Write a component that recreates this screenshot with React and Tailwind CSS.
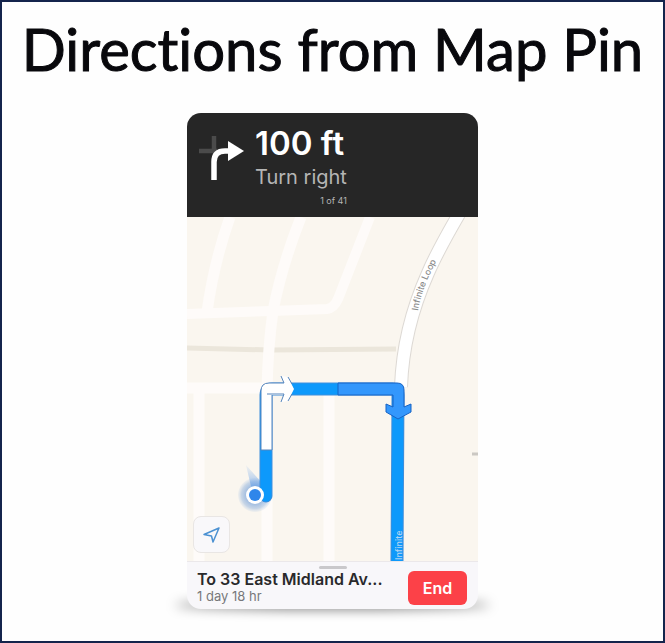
function TurnIcon() {
  return (
    <svg className="block h-12 w-12 shrink-0" viewBox="0 0 48 48" fill="none" aria-hidden="true">
      <path d="M0 18H18M15 3V18" stroke="#4b4b4b" strokeWidth="4.500" />
      <path d="M15 47V29Q15 18 26 18H32" stroke="#fff" strokeWidth="5.500" />
      <path d="M29 8L45 18L29 28Z" fill="#fff" />
    </svg>
  );
}

function MapView() {
  return (
    <svg className="block w-full" viewBox="0 0 291 344" role="img" aria-label="Route map">
      <defs>
        <radialGradient id="halo">
          <stop offset="0.4" stopColor="#6d9bd8" stopOpacity="0.75" />
          <stop offset="0.8" stopColor="#9bb9df" stopOpacity="0.55" />
          <stop offset="1" stopColor="#c5d5e8" stopOpacity="0.2" />
        </radialGradient>
        <linearGradient id="beam" x1="0" y1="0" x2="0" y2="1">
          <stop offset="0" stopColor="#8fb9ee" stopOpacity="0.1" />
          <stop offset="1" stopColor="#4b8fe4" stopOpacity="0.8" />
        </linearGradient>
        <path id="loop" d="M231 94Q235 69 254 36" />
      </defs>
      <rect width="291" height="344" fill="#faf6ef" />
      <path d="M0 131L83 133L209 132" fill="none" stroke="#ebe6db" strokeWidth="5" />
      <g fill="none" stroke="#fefbf9" strokeWidth="11">
        <path d="M43 0Q27 45 20 95" />
        <path d="M114 0Q95 48 86 94Q81 130 80 172V344" />
        <path d="M0 97L84 94L140 92Q147 91 151 82L183 0" strokeWidth="10" />
        <path d="M0 171H210" />
        <path d="M12 171V344M142 171V344" />
      </g>
      <path d="M272 -3Q250 35 241 56Q216 112 214 170" fill="none" stroke="#ddd9d4" strokeWidth="14" />
      <path d="M272 -3Q250 35 241 56Q216 112 214 170" fill="none" stroke="#fff" strokeWidth="12" />
      <text fill="#8c8c8c" className="font-['Inter',sans-serif] text-[9px] font-medium">
        <textPath href="#loop">Infinite Loop</textPath>
      </text>
      <path d="M285 237H291" stroke="#cbc8c3" strokeWidth="3" />
      <circle cx="68" cy="278" r="17" fill="url(#halo)" />
      <path d="M59 248L75 266L73 278H66Z" fill="url(#beam)" />
      <path
        d="M79 279V178Q79 172 85 172H205Q211 172 211 178L210 344"
        fill="none"
        stroke="#3f8edb"
        strokeWidth="13"
        strokeLinecap="round"
      />
      <path
        d="M79 279V178Q79 172 85 172H205Q211 172 211 178L210 344"
        fill="none"
        stroke="#0d99fb"
        strokeWidth="11"
        strokeLinecap="round"
      />
      <path
        d="M74 233V174Q74 166 82 166H97L94 159L101 160L107 172L101 184L94 185L97 178H85V233Z"
        fill="#fff"
      />
      <path
        d="M101 160L105 167M101 184L105 177M85 178V233H74V174Q74 166 82 166H97L94 159M80 177H97L94 185"
        fill="none"
        stroke="#5585bd"
        strokeWidth="1"
      />
      <path
        d="M151 166H210Q217 166 217 173V190L224 187V195L211 202L199 195V187L206 190V178H151Z"
        fill="#3397fc"
        stroke="#1763c4"
        strokeWidth="1"
      />
      <text
        transform="translate(215 343) rotate(-90)"
        fill="#b4d5f3"
        className="font-['Inter',sans-serif] text-[9px] font-medium"
      >
        Infinite
      </text>
      <circle cx="68" cy="278" r="9" fill="#fff" />
      <circle cx="68" cy="278" r="6" fill="#2f86ea" />
    </svg>
  );
}

export default function App() {
  return (
    <main className="flex min-h-screen flex-col items-center border-2 border-[#14244c] bg-[#fefefe] pb-8 font-['Inter',sans-serif]">
      <h1 className="mt-3 whitespace-nowrap font-['Lato',sans-serif] text-[58px] leading-[70px] text-[#08080c] [-webkit-text-stroke:1px_#08080c] [font-variant-ligatures:none]">
        Directions from Map Pin
      </h1>
      <section className="relative mt-[29px] w-[291px]">
        <div className="absolute -inset-x-3 bottom-0 h-2 rounded-[50%] bg-black/60 blur-[6px]" />
        <div className="relative overflow-hidden rounded-[14px] bg-[#f8f7fa]">
          <header className="flex h-[104px] gap-2 bg-[#262626] pl-3 pt-3">
            <div className="pt-2">
              <TurnIcon />
            </div>
            <div className="text-right">
              <p className="text-left text-[33px] font-semibold leading-9 text-white">100 ft</p>
              <p className="text-xl leading-8 text-[#b5b5b5]">Turn right</p>
              <p className="text-[9px] leading-4 text-[#b5b5b5]">1 of 41</p>
            </div>
          </header>
          <div className="relative">
            <MapView />
            <button
              aria-label="Show my location"
              className="absolute bottom-2 left-1.5 flex size-[37px] items-center justify-center rounded-lg border border-[#e9e6e4] bg-[#f9f8fa]"
            >
              <svg className="size-5" viewBox="0 0 20 20" fill="none" aria-hidden="true">
                <path d="M17 3L2 9.500L9.500 11L11 17Z" stroke="#4b91d2" strokeWidth="1.500" strokeLinejoin="round" />
              </svg>
            </button>
          </div>
          <footer className="relative flex h-12 items-center justify-between border-t border-[#ebe8ea] pl-2.5 pr-[11px]">
            <span className="absolute left-1/2 top-1 h-[3px] w-7 -translate-x-1/2 rounded-full bg-[#c9c8cb]" />
            <div className="pt-0.5">
              <p className="text-base font-semibold leading-[18px] text-[#29292b]">To 33 East Midland Av...</p>
              <p className="text-[13px] leading-4 text-[#77777a]">1 day 18 hr</p>
            </div>
            <button className="mt-1 h-[34px] w-[59px] rounded-md bg-[#fc4148] text-base font-semibold text-white">
              End
            </button>
          </footer>
        </div>
      </section>
    </main>
  );
}
